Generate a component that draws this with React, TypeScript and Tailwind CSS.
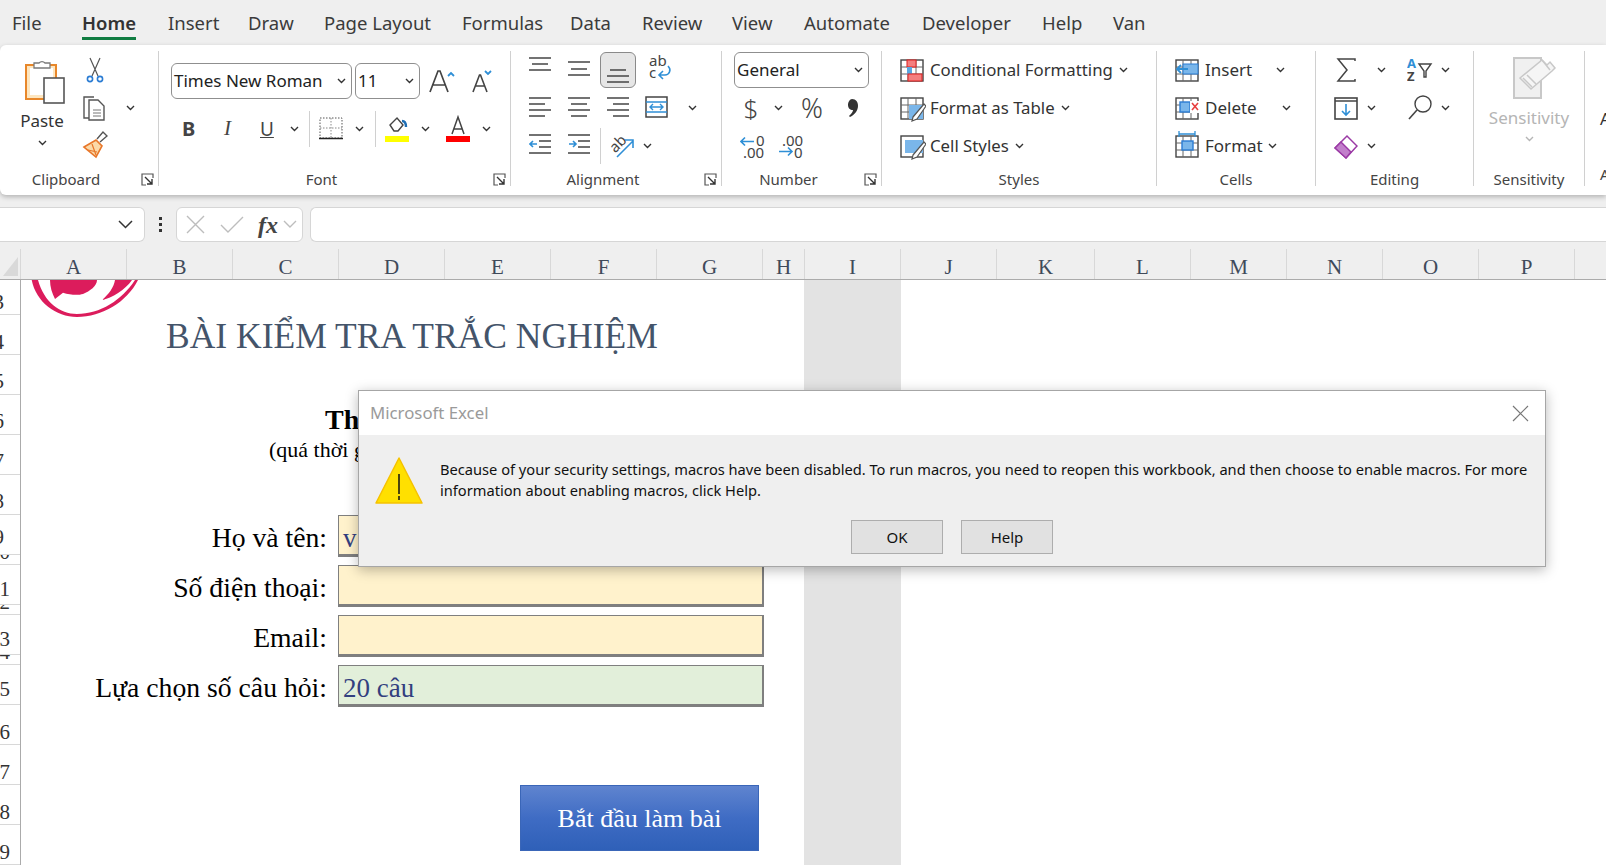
import type { ReactNode } from 'react';

const UI = 'font-["Noto_Sans",sans-serif]';
const SERIF = 'font-["Liberation_Serif",serif]';

const TABS = [
  ['File', 'w-[70px]'],
  ['Home', 'w-[86px]'],
  ['Insert', 'w-[80px]'],
  ['Draw', 'w-[76px]'],
  ['Page Layout', 'w-[138px]'],
  ['Formulas', 'w-[108px]'],
  ['Data', 'w-[72px]'],
  ['Review', 'w-[90px]'],
  ['View', 'w-[72px]'],
  ['Automate', 'w-[118px]'],
  ['Developer', 'w-[120px]'],
  ['Help', 'w-[71px]'],
  ['Van', 'w-[50px]'],
];

const COLUMNS = [
  ['A', 'w-[106px]'],
  ['B', 'w-[106px]'],
  ['C', 'w-[106px]'],
  ['D', 'w-[106px]'],
  ['E', 'w-[106px]'],
  ['F', 'w-[106px]'],
  ['G', 'w-[106px]'],
  ['H', 'w-[42px]'],
  ['I', 'w-[96px]'],
  ['J', 'w-[96px]'],
  ['K', 'w-[98px]'],
  ['L', 'w-[96px]'],
  ['M', 'w-[96px]'],
  ['N', 'w-[96px]'],
  ['O', 'w-[96px]'],
  ['P', 'w-[96px]'],
];

// number, row height, lift of the digit inside its row
const ROWS = [
  ['3', 'h-[35px]', 'pr-[16px]'],
  ['4', 'h-[40px]', 'pr-[16px]'],
  ['5', 'h-[40px]', 'pr-[16px] pb-[1px]'],
  ['6', 'h-[40px]', 'pr-[16px] pb-[1px]'],
  ['7', 'h-[40px]', 'pr-[16px] pb-[1px]'],
  ['8', 'h-[40px]', 'pr-[16px] pb-[1px]'],
  ['9', 'h-[40px]', 'pr-[16px] pb-[5px]'],
  ['10', 'h-[10px]', 'pr-[10px]'],
  ['11', 'h-[40px]', 'pr-[10px] pb-[3px]'],
  ['12', 'h-[10px]', 'pr-[10px]'],
  ['13', 'h-[40px]', 'pr-[10px] pb-[3px]'],
  ['14', 'h-[10px]', 'pr-[10px]'],
  ['15', 'h-[40px]', 'pr-[10px] pb-[3px]'],
  ['16', 'h-[40px]', 'pr-[10px]'],
  ['17', 'h-[40px]', 'pr-[10px]'],
  ['18', 'h-[40px]', 'pr-[10px]'],
  ['19', 'h-[40px]', 'pr-[10px]'],
];

const DARK = '#444444';
const BLUE = '#2f8fd6';

// row-height svg, so the coordinates inside read straight off the ribbon row
const Ic = ({ w, children }: { w: number; children: ReactNode }) => (
  <svg width={w} height={38} viewBox={`0 0 ${w} 38`} fill="none" className="shrink-0">
    {children}
  </svg>
);

const Chev = ({ color = '#333333' }: { color?: string }) => (
  <svg width="9" height="6" viewBox="0 0 9 6" fill="none" className="shrink-0">
    <path d="M1 1l3.5 3.5L8 1" stroke={color} strokeWidth="1.4" />
  </svg>
);

const Launcher = () => (
  <div className="w-[26px] flex justify-end pr-[4px]">
    <svg width="13" height="13" viewBox="0 0 13 13" fill="none">
      <path d="M12 5V1H1v11h4" stroke="#555555" strokeWidth="1.2" />
      <path d="M4 4l7 7M11 6v5H6" stroke="#333333" strokeWidth="1.4" />
    </svg>
  </div>
);

const GroupLabel = ({ text, launcher }: { text: string; launcher?: boolean }) => (
  <div className="mt-[4px] h-[21px] shrink-0 flex items-center">
    <div className="flex-1 text-center text-[15px] leading-[21px] text-[#444444] whitespace-nowrap">{text}</div>
    {launcher ? <Launcher /> : null}
  </div>
);

const Lines = ({ rows }: { rows: [number, number, number][] }) => (
  <Ic w={22}>
    {rows.map(([y, a, b]) => (
      <path key={y} d={`M${a} ${y}H${b}`} stroke={DARK} strokeWidth="1.5" />
    ))}
  </Ic>
);

const Select = ({ text, className }: { text: string; className: string }) => (
  <div className={`h-[36px] border border-[#8f8f8f] rounded-[6px] bg-white flex items-center justify-between pl-[2px] pr-[5px] ${className}`}>
    <span className="text-[17px] text-[#222222] whitespace-nowrap">{text}</span>
    <Chev />
  </div>
);

const GridBase = () => (
  <>
    <rect x="1" y="9" width="22" height="21" stroke={DARK} strokeWidth="1.4" />
    <path d="M1 16h22M1 23h22M8 9v21M16 9v21" stroke="#666666" strokeWidth="1" />
  </>
);

const PasteIcon = () => (
  <svg width="42" height="46" viewBox="0 0 42 46" fill="none">
    <rect x="2" y="7" width="30" height="34" fill="#fde6c0" stroke="#e8872a" strokeWidth="2" />
    <rect x="6" y="10" width="23" height="27" fill="#ffffff" />
    <path d="M10 10V5h5a4 4 0 0 1 6 0h5v5z" fill="#ffffff" stroke="#7a7a7a" strokeWidth="1.3" />
    <rect x="20" y="20" width="20" height="25" fill="#ffffff" stroke="#555555" strokeWidth="1.6" />
  </svg>
);

const CutIcon = () => (
  <Ic w={20}>
    <path d="M5 7l8 18M15 7L7 25" stroke="#555555" strokeWidth="1.2" />
    <circle cx="5" cy="28" r="2.6" stroke="#2b7cd3" strokeWidth="1.6" />
    <circle cx="15" cy="28" r="2.6" stroke="#2b7cd3" strokeWidth="1.6" />
  </Ic>
);

const CopyIcon = () => (
  <Ic w={26}>
    <path d="M10 29H2V8h10" stroke="#555555" strokeWidth="1.4" />
    <path d="M7 11h9l6 6v14H7z" fill="#ffffff" stroke="#555555" strokeWidth="1.4" />
    <path d="M11 21h8M11 24h8M11 27h8" stroke="#777777" strokeWidth="1" />
  </Ic>
);

const PainterIcon = () => (
  <Ic w={26}>
    <path d="M15 12l6-7 4 4-7 6" fill="#ffffff" stroke="#555555" strokeWidth="1.4" />
    <path d="M2 20l12-7 6 6-6 11z" fill="#fbd9a8" stroke="#e8772a" strokeWidth="1.6" />
    <path d="M6 23l9 2M10 17l4 11" stroke="#e8772a" strokeWidth="1.2" />
  </Ic>
);

const Clipboard = () => (
  <div className="w-[159px] h-[135px] shrink-0 border-r border-[#d0d0d0] flex flex-col">
    <div className="h-[114px] shrink-0 flex">
      <div className="w-[84px] flex flex-col items-center pt-[7px]">
        <div className="ml-[6px]">
          <PasteIcon />
        </div>
        <div className="mt-[5px] text-[17px] leading-[24px] text-[#333333]">Paste</div>
        <div className="mt-[7px]">
          <Chev />
        </div>
      </div>
      <div className="-ml-[2px] flex flex-col">
        <div className="h-[38px] pl-[3px]">
          <CutIcon />
        </div>
        <div className="h-[38px] flex items-center">
          <CopyIcon />
          <div className="ml-[18px]">
            <Chev />
          </div>
        </div>
        <div className="h-[38px]">
          <PainterIcon />
        </div>
      </div>
    </div>
    <GroupLabel text="Clipboard" launcher />
  </div>
);

const FontGroup = () => (
  <div className="w-[352px] h-[135px] shrink-0 border-r border-[#d0d0d0] flex flex-col">
    <div className="h-[114px] shrink-0 flex flex-col pl-[12px]">
      <div className="mt-[12px] h-[36px] flex items-center">
        <Select text="Times New Roman" className="w-[181px]" />
        <Select text="11" className="w-[65px] ml-[3px]" />
        <svg width="32" height="30" viewBox="0 0 32 30" fill="none" className="ml-[8px]">
          <path d="M2 26L10 5h2l8 21M5 19h12" stroke={DARK} strokeWidth="1.7" />
          <path d="M20 10l3-3 3 3" stroke={BLUE} strokeWidth="1.8" />
        </svg>
        <svg width="26" height="30" viewBox="0 0 26 30" fill="none" className="ml-[11px]">
          <path d="M2 26L8.5 9h1L16 26M4.5 20h9" stroke={DARK} strokeWidth="1.6" />
          <path d="M14 5l3 3 3-3" stroke={BLUE} strokeWidth="1.8" />
        </svg>
      </div>
      <div className="mt-[11px] h-[38px] flex items-center">
        <span className="ml-[11px] w-[42px] text-[20px] font-bold text-[#444444]">B</span>
        <span className={`w-[36px] text-[21px] italic text-[#444444] ${SERIF}`}>I</span>
        <span className="w-[22px] text-[19px] leading-[24px] underline text-[#444444]">U</span>
        <div className="ml-[8px]">
          <Chev />
        </div>
        <div className="ml-[10px] h-[36px] w-px bg-[#d0d0d0]" />
        <div className="ml-[9px]">
          <Ic w={24}>
            <rect x="1" y="8" width="22" height="20" stroke="#555555" strokeWidth="1" strokeDasharray="1.5 1.5" />
            <path d="M1 18h22M12 8v20" stroke="#888888" strokeWidth="1" strokeDasharray="1.5 1.5" />
            <path d="M0 28.5h24" stroke="#222222" strokeWidth="1.5" />
          </Ic>
        </div>
        <div className="ml-[12px]">
          <Chev />
        </div>
        <div className="ml-[11px] h-[36px] w-px bg-[#d0d0d0]" />
        <div className="ml-[9px]">
          <Ic w={24}>
            <path d="M5 15l7-7 6 7-5 6H9z" fill="#ffffff" stroke={DARK} strokeWidth="1.4" />
            <path d="M17 11c3 0 4 2 4 6" stroke="#1f6fb5" strokeWidth="2.4" />
            <rect x="0" y="26" width="24" height="6" fill="#ffff00" />
          </Ic>
        </div>
        <div className="ml-[12px]">
          <Chev />
        </div>
        <div className="ml-[16px]">
          <Ic w={24}>
            <path d="M6 24L12 7l6 17M8 19h8" stroke={DARK} strokeWidth="1.5" />
            <rect x="0" y="26" width="24" height="6" fill="#ff0000" />
          </Ic>
        </div>
        <div className="ml-[12px]">
          <Chev />
        </div>
      </div>
    </div>
    <GroupLabel text="Font" launcher />
  </div>
);

const Alignment = () => (
  <div className="w-[211px] h-[135px] shrink-0 border-r border-[#d0d0d0] flex flex-col">
    <div className="h-[114px] shrink-0 flex flex-col pl-[18px]">
      <div className="h-[38px] flex items-center">
        <Lines rows={[[7, 0, 22], [13, 3, 19], [19, 0, 22]]} />
        <div className="ml-[17px]">
          <Lines rows={[[11, 0, 22], [18, 3, 19], [24, 0, 22]]} />
        </div>
        <div className="ml-[10px] w-[36px] h-[36px] border border-[#8a8a8a] rounded-[6px] bg-[#e6e6e6] flex justify-center">
          <Lines rows={[[17, 3, 19], [23, 0, 22], [29, 0, 22]]} />
        </div>
        <div className="ml-[12px]">
          <Ic w={24}>
            <text x="1" y="15" fontSize="15" fontFamily="Noto Sans" fill={DARK}>ab</text>
            <text x="1" y="27" fontSize="15" fontFamily="Noto Sans" fill={DARK}>c</text>
            <path d="M20 15c4 4 1 9-3 9h-5M15 20l-4 4 4 4" stroke={BLUE} strokeWidth="1.6" />
          </Ic>
        </div>
      </div>
      <div className="h-[38px] flex items-center">
        <Lines rows={[[9, 0, 22], [15, 0, 16], [21, 0, 22], [27, 0, 16]]} />
        <div className="ml-[17px]">
          <Lines rows={[[9, 0, 22], [15, 3, 19], [21, 0, 22], [27, 3, 19]]} />
        </div>
        <div className="ml-[17px]">
          <Lines rows={[[9, 0, 22], [15, 6, 22], [21, 0, 22], [27, 6, 22]]} />
        </div>
        <div className="ml-[16px]">
          <Ic w={23}>
            <rect x="1" y="8" width="21" height="20" stroke={DARK} strokeWidth="1.5" />
            <path d="M1 13h21M1 23h21" stroke={BLUE} strokeWidth="1.4" />
            <path d="M5 18h13M8 15l-3 3 3 3M15 15l3 3-3 3" stroke={BLUE} strokeWidth="1.4" />
          </Ic>
        </div>
        <div className="ml-[20px]">
          <Chev />
        </div>
      </div>
      <div className="h-[38px] flex items-center">
        <Ic w={22}>
          <path d="M0 8h22M10 14h12M10 20h12M0 26h22" stroke={DARK} strokeWidth="1.5" />
          <path d="M8 17H1M4 14l-3 3 3 3" stroke={BLUE} strokeWidth="1.6" />
        </Ic>
        <div className="ml-[17px]">
          <Ic w={22}>
            <path d="M0 8h22M10 14h12M10 20h12M0 26h22" stroke={DARK} strokeWidth="1.5" />
            <path d="M1 17h7M5 14l3 3-3 3" stroke={BLUE} strokeWidth="1.6" />
          </Ic>
        </div>
        <div className="ml-[10px] h-[36px] w-px bg-[#d0d0d0]" />
        <div className="ml-[9px]">
          <Ic w={25}>
            <text x="0" y="22" fontSize="15" fontFamily="Noto Sans" fill={DARK} transform="rotate(-45 8 18)">ab</text>
            <path d="M7 30L23 14M15 13h8v8" stroke={BLUE} strokeWidth="1.6" />
          </Ic>
        </div>
        <div className="ml-[8px]">
          <Chev />
        </div>
      </div>
    </div>
    <GroupLabel text="Alignment" launcher />
  </div>
);

const NumberGroup = () => (
  <div className="w-[160px] h-[135px] shrink-0 border-r border-[#d0d0d0] flex flex-col">
    <div className="h-[114px] shrink-0 flex flex-col pl-[12px]">
      <div className="h-[38px] flex items-center">
        <Select text="General" className="w-[135px]" />
      </div>
      <div className="h-[38px] flex items-center">
        <span className="ml-[4px] w-[26px] text-center text-[26px] font-light text-[#444444]">$</span>
        <div className="ml-[10px]">
          <Chev />
        </div>
        <span className="ml-[16px] w-[26px] text-center text-[27px] font-light text-[#444444]">%</span>
        <div className="ml-[20px]">
          <Ic w={14}>
            <path d="M7 10c4 0 6 3 6 7 0 5-4 9-8 11l-1-1c2-2 4-4 4-6-3 0-5-2-5-5s2-6 4-6z" fill="#333333" />
          </Ic>
        </div>
      </div>
      <div className="h-[38px] flex items-center">
        <div className="ml-[6px]">
          <Ic w={26}>
            <text x="16" y="19" fontSize="15" fontFamily="Noto Sans" fill={DARK}>0</text>
            <text x="3" y="31" fontSize="15" fontFamily="Noto Sans" fill={DARK}>.00</text>
            <path d="M14 14.5H1M5 10.5l-4 4 4 4" stroke={BLUE} strokeWidth="1.6" />
          </Ic>
        </div>
        <div className="ml-[12px]">
          <Ic w={26}>
            <text x="4" y="19" fontSize="15" fontFamily="Noto Sans" fill={DARK}>.00</text>
            <text x="16" y="31" fontSize="15" fontFamily="Noto Sans" fill={DARK}>0</text>
            <path d="M1 24.5h13M10 20.5l4 4-4 4" stroke={BLUE} strokeWidth="1.6" />
          </Ic>
        </div>
      </div>
    </div>
    <GroupLabel text="Number" launcher />
  </div>
);

const BrushOverlay = () => (
  <path d="M13 28l11-13 2 2-9 13-5 2z" fill="#ffffff" stroke="#555555" strokeWidth="1.2" />
);

const StyleRow = ({ icon, text }: { icon: ReactNode; text: string }) => (
  <div className="h-[38px] flex items-center">
    <Ic w={26}>{icon}</Ic>
    <span className="ml-[4px] text-[16.8px] text-[#333333] whitespace-nowrap">{text}</span>
    <div className="ml-[6px]">
      <Chev />
    </div>
  </div>
);

const Styles = () => (
  <div className="w-[275px] h-[135px] shrink-0 border-r border-[#d0d0d0] flex flex-col">
    <div className="h-[114px] shrink-0 flex flex-col pl-[18px]">
      <StyleRow
        text="Conditional Formatting"
        icon={
          <>
            <GridBase />
            <rect x="7" y="9" width="9" height="7" fill="#f47f7f" stroke="#e02020" />
            <rect x="7" y="16" width="5" height="8" fill="#5aa7e0" />
            <rect x="8" y="23" width="14" height="7" fill="#f47f7f" stroke="#e02020" />
          </>
        }
      />
      <StyleRow
        text="Format as Table"
        icon={
          <>
            <GridBase />
            <path d="M9 16h14v14H9z" fill="#7ab6ea" />
            <BrushOverlay />
          </>
        }
      />
      <StyleRow
        text="Cell Styles"
        icon={
          <>
            <rect x="1" y="9" width="22" height="21" stroke={DARK} strokeWidth="1.4" />
            <path d="M5 13h18v13H5z" fill="#7ab6ea" />
            <BrushOverlay />
          </>
        }
      />
    </div>
    <GroupLabel text="Styles" />
  </div>
);

const CellRow = ({ icon, text, gap }: { icon: ReactNode; text: string; gap: string }) => (
  <div className="h-[38px] flex items-center">
    <Ic w={24}>{icon}</Ic>
    <span className="ml-[6px] text-[17px] text-[#333333] whitespace-nowrap">{text}</span>
    <div className={gap}>
      <Chev />
    </div>
  </div>
);

const Cells = () => (
  <div className="w-[159px] h-[135px] shrink-0 border-r border-[#d0d0d0] flex flex-col">
    <div className="h-[114px] shrink-0 flex flex-col pl-[18px]">
      <CellRow
        text="Insert"
        gap="ml-[24px]"
        icon={
          <>
            <GridBase />
            <rect x="8" y="13" width="15" height="10" fill="#7ab6ea" stroke="#2b7cd3" />
            <path d="M13 18H2M6 14l-4 4 4 4" stroke={BLUE} strokeWidth="1.8" />
          </>
        }
      />
      <CellRow
        text="Delete"
        gap="ml-[25px]"
        icon={
          <>
            <GridBase />
            <rect x="5" y="13" width="10" height="10" fill="#7ab6ea" stroke="#2b7cd3" strokeWidth="1.4" />
            <rect x="15" y="12" width="9" height="12" fill="#ffffff" />
            <path d="M17 14l6 7M23 14l-6 7" stroke="#e84040" strokeWidth="1.6" />
          </>
        }
      />
      <CellRow
        text="Format"
        gap="ml-[5px]"
        icon={
          <>
            <GridBase />
            <rect x="7" y="14" width="11" height="9" fill="#7ab6ea" stroke="#2b7cd3" strokeWidth="1.4" />
            <path d="M4 7h16M4 4v6M20 4v6" stroke={BLUE} strokeWidth="1.3" />
          </>
        }
      />
    </div>
    <GroupLabel text="Cells" />
  </div>
);

const Editing = () => (
  <div className="w-[158px] h-[135px] shrink-0 border-r border-[#d0d0d0] flex flex-col">
    <div className="h-[114px] shrink-0 flex flex-col pl-[18px]">
      <div className="h-[38px] flex items-center">
        <Ic w={24}>
          <path d="M21 10V8H4l9 11-9 11h17v-2" stroke={DARK} strokeWidth="1.5" />
        </Ic>
        <div className="ml-[19px]">
          <Chev />
        </div>
        <div className="ml-[21px]">
          <Ic w={26}>
            <text x="0" y="17" fontSize="13" fontWeight="700" fontFamily="Noto Sans" fill={BLUE}>A</text>
            <text x="0" y="30" fontSize="13" fontWeight="700" fontFamily="Noto Sans" fill={DARK}>Z</text>
            <path d="M12 13h12l-5 7v6h-2v-6z" stroke={DARK} strokeWidth="1.4" />
          </Ic>
        </div>
        <div className="ml-[8px]">
          <Chev />
        </div>
      </div>
      <div className="h-[38px] flex items-center">
        <Ic w={24}>
          <rect x="1" y="9" width="22" height="21" stroke={DARK} strokeWidth="1.6" />
          <path d="M1 12h22" stroke={DARK} strokeWidth="1.3" />
          <path d="M12 15v11M8 22l4 4 4-4" stroke={BLUE} strokeWidth="1.6" />
        </Ic>
        <div className="ml-[9px]">
          <Chev />
        </div>
        <div className="ml-[32px]">
          <Ic w={26}>
            <circle cx="15" cy="15" r="8" stroke={DARK} strokeWidth="1.4" />
            <path d="M9 21L1 30" stroke={DARK} strokeWidth="1.6" />
          </Ic>
        </div>
        <div className="ml-[7px]">
          <Chev />
        </div>
      </div>
      <div className="h-[38px] flex items-center">
        <Ic w={24}>
          <path d="M1 21L13 9l10 10-11 12z" fill="#ffffff" stroke="#9b3aa5" strokeWidth="1.5" />
          <path d="M1 21l6-6 10 10-5 6z" fill="#c27fcb" stroke="#9b3aa5" strokeWidth="1.5" />
        </Ic>
        <div className="ml-[9px]">
          <Chev />
        </div>
      </div>
    </div>
    <GroupLabel text="Editing" />
  </div>
);

const Sensitivity = () => (
  <div className="w-[111px] h-[135px] shrink-0 border-r border-[#d0d0d0] flex flex-col">
    <div className="h-[114px] shrink-0 flex flex-col items-center">
      <svg width="44" height="46" viewBox="0 0 44 46" fill="none" className="mt-[3px] ml-[10px]">
        <path d="M2 4h27v40H2z" fill="#f0f0f0" stroke="#c8c8c8" strokeWidth="2" />
        <path d="M8 24L30 6l5 5 3-3 5 6-3 3-21 18z" fill="#f5f5f5" stroke="#c8c8c8" strokeWidth="1.5" />
        <path d="M11 24l9 9M15 21l9 9M30 6l8 10" stroke="#c8c8c8" strokeWidth="1.5" />
      </svg>
      <div className="mt-[6px] text-[17px] leading-[24px] text-[#b5b5b5]">Sensitivity</div>
      <div className="mt-[6px]">
        <Chev color="#b5b5b5" />
      </div>
    </div>
    <GroupLabel text="Sensitivity" />
  </div>
);

const Ribbon = () => (
  <div className={`h-[150px] bg-white rounded-l-[6px] shadow-[0_2px_5px_rgba(0,0,0,0.25)] flex pt-[6px] overflow-hidden ${UI}`}>
    <Clipboard />
    <FontGroup />
    <Alignment />
    <NumberGroup />
    <Styles />
    <Cells />
    <Editing />
    <Sensitivity />
    <div className="h-[135px] pl-[15px] flex flex-col">
      <div className="mt-[56px] text-[17px] leading-[24px] text-[#333333]">A</div>
      <div className="mt-[33px] text-[15px] leading-[21px] text-[#444444]">A</div>
    </div>
  </div>
);

const FormulaBar = () => (
  <div className="h-[54px] pt-[12px] flex">
    <div className="w-[145px] h-[35px] bg-white border border-l-0 border-[#d6d6d6] rounded-r-[6px] flex items-center justify-end pr-[11px]">
      <svg width="15" height="9" viewBox="0 0 15 9" fill="none">
        <path d="M1 1l6.5 6.5L14 1" stroke="#333333" strokeWidth="1.5" />
      </svg>
    </div>
    <div className="w-[31px] h-[35px] flex flex-col items-center justify-center gap-[3px]">
      <div className="w-[3px] h-[3px] bg-[#333333]" />
      <div className="w-[3px] h-[3px] bg-[#333333]" />
      <div className="w-[3px] h-[3px] bg-[#333333]" />
    </div>
    <div className="w-[127px] h-[35px] bg-white border border-[#d6d6d6] rounded-[6px] flex items-center pl-[9px]">
      <svg width="19" height="19" viewBox="0 0 19 19" fill="none">
        <path d="M1 1l17 17M18 1L1 18" stroke="#bdbdbd" strokeWidth="1.4" />
      </svg>
      <svg width="24" height="17" viewBox="0 0 24 17" fill="none" className="ml-[15px]">
        <path d="M1 9l7 7L23 1" stroke="#bdbdbd" strokeWidth="1.4" />
      </svg>
      <span className={`ml-[14px] w-[24px] text-[24px] leading-[30px] italic font-bold text-[#444444] ${SERIF}`}>fx</span>
      <svg width="14" height="9" viewBox="0 0 14 9" fill="none" className="ml-[1px]">
        <path d="M1 1l6 6 6-6" stroke="#bdbdbd" strokeWidth="1.4" />
      </svg>
    </div>
    <div className="ml-[7px] flex-1 h-[35px] bg-white border border-r-0 border-[#d6d6d6] rounded-l-[6px]" />
  </div>
);

const ColumnHeader = () => (
  <div className={`h-[31px] flex border-b border-[#ababab] ${SERIF}`}>
    <div className="w-[21px] flex items-end justify-center pb-[3px] border-r border-[#d8d8d8]">
      <svg width="15" height="19" viewBox="0 0 15 19">
        <path d="M15 0v19H0z" fill="#d9d9d9" />
      </svg>
    </div>
    {COLUMNS.map(([name, width]) => (
      <div
        key={name}
        className={`${width} shrink-0 border-r border-[#d8d8d8] flex items-end justify-center text-[21px] leading-[24px] text-[#3f4a5a]`}
      >
        {name}
      </div>
    ))}
  </div>
);

const RowHeader = () => (
  <div className={`w-[21px] shrink-0 border-r border-[#ababab] flex flex-col ${SERIF}`}>
    {ROWS.map(([digit, height, inset]) => (
      <div
        key={digit}
        className={`${height} ${inset} shrink-0 overflow-hidden border-b border-[#d8d8d8] flex items-end justify-end text-[21px] leading-[24px] text-[#333333]`}
      >
        {digit}
      </div>
    ))}
  </div>
);

const Logo = () => (
  <div className="absolute left-[30px] top-[280px]">
    <svg width="112" height="38" viewBox="0 0 112 38" fill="none">
      <path d="M1.7 0C6 22 26 37 47 37C72 37 97 22 108 0H105C92 20 70 34 47 34C30 34 14 22 8 0z" fill="#dc1c5c" />
      <path d="M20 0C20 7 22 13 25 19L33 12.7C40 15 48 15.5 53 14C60 11 67 6 67 0z" fill="#dc1c5c" />
      <path d="M85 0C84 7 79 14 72 20C82 18 95 10 102 0z" fill="#dc1c5c" />
    </svg>
  </div>
);

const Field = ({ label, fill, value }: { label: string; fill: string; value?: string }) => (
  <div className="flex h-[42px]">
    <div className="w-[306px] h-[42px] text-right text-[27.7px] leading-[46px] text-black whitespace-nowrap">{label}</div>
    <div
      className={`ml-[11px] w-[426px] h-[42px] border border-b-[3px] border-r-2 border-[#7f7f7f] pl-[4px] text-[27px] leading-[45px] text-[#333f7f] ${fill}`}
    >
      {value}
    </div>
  </div>
);

const Sheet = () => (
  <div className={`h-[585px] flex overflow-hidden bg-white ${SERIF}`}>
    <RowHeader />
    <div className="w-[783px] shrink-0 flex flex-col">
      <div className="ml-[145px] mt-[36px] h-[40px] text-[35.5px] leading-[40px] text-[#44546a] whitespace-nowrap">
        BÀI KIỂM TRA TRẮC NGHIỆM
      </div>
      <div className="ml-[304px] mt-[48px] h-[32px] text-[28px] leading-[32px] font-bold text-black whitespace-nowrap">
        Thời gian
      </div>
      <div className="ml-[248px] h-[28px] text-[22px] leading-[28px] text-black whitespace-nowrap">(quá thời gian</div>
      <div className="mt-[51px] flex flex-col gap-2">
        <Field label="Họ và tên:" fill="bg-[#fff2cc]" value="v" />
        <Field label="Số điện thoại:" fill="bg-[#fff2cc]" />
        <Field label="Email:" fill="bg-[#fff2cc]" />
        <Field label="Lựa chọn số câu hỏi:" fill="bg-[#e2efda]" value="20 câu" />
      </div>
      <div className="ml-[499px] mt-[78px] w-[239px] h-[66px] border border-[#3a66b8] bg-gradient-to-b from-[#5f84cf] via-[#3f6cc4] to-[#2f60b8] flex items-center justify-center text-[26px] text-white">
        Bắt đầu làm bài
      </div>
    </div>
    <div className="w-[97px] shrink-0 bg-[#e3e3e3]" />
  </div>
);

const WarningIcon = () => (
  <svg width="50" height="48" viewBox="0 0 50 48" fill="none">
    <path d="M25 2l23 45H2z" fill="#ffe000" stroke="#f6c200" strokeWidth="1.5" strokeLinejoin="round" />
    <path d="M25 18v20M25 40v4" stroke="#111111" strokeWidth="1.5" />
  </svg>
);

const Dialog = () => (
  <div className={`absolute left-[358px] top-[390px] w-[1188px] h-[177px] border border-[#a6a6a6] bg-[#efefef] shadow-[0_3px_12px_rgba(0,0,0,0.28)] flex flex-col ${UI}`}>
    <div className="h-[44px] bg-white flex items-center justify-between pl-[11px] pr-[16px]">
      <span className="text-[16.8px] text-[#9a9a9a]">Microsoft Excel</span>
      <svg width="17" height="17" viewBox="0 0 17 17" fill="none">
        <path d="M1 1l15 15M16 1L1 16" stroke="#777777" strokeWidth="1.2" />
      </svg>
    </div>
    <div className="flex pl-[15px] pt-[21px]">
      <WarningIcon />
      <p className="ml-[16px] mt-[3px] text-[14.65px] leading-[21px] text-[#111111] whitespace-nowrap">
        Because of your security settings, macros have been disabled. To run macros, you need to reopen this workbook, and then choose to enable macros. For more
        <br />
        information about enabling macros, click Help.
      </p>
    </div>
    <div className="mt-[16px] flex gap-[18px] pl-[492px]">
      <button type="button" className="w-[92px] h-[34px] bg-[#e1e1e1] border border-[#adadad] text-[15px] text-[#111111]">
        OK
      </button>
      <button type="button" className="w-[92px] h-[34px] bg-[#e1e1e1] border border-[#adadad] text-[15px] text-[#111111]">
        Help
      </button>
    </div>
  </div>
);

export default function App() {
  return (
    <div className={`relative w-[1606px] h-[865px] overflow-hidden bg-[#efefef] ${UI}`}>
      <div className="h-[45px] flex pl-[12px] pt-[10px]">
        {TABS.map(([name, width]) => (
          <div key={name} className={`${width} shrink-0`}>
            {name === 'Home' ? (
              <span className="inline-block h-[30px] border-b-[3px] border-[#107c41] text-[18.5px] leading-[26px] font-semibold text-[#333333]">
                {name}
              </span>
            ) : (
              <span className="text-[18.5px] leading-[26px] text-[#3b3b3b]">{name}</span>
            )}
          </div>
        ))}
      </div>
      <Ribbon />
      <FormulaBar />
      <ColumnHeader />
      <Sheet />
      <Logo />
      <Dialog />
    </div>
  );
}
